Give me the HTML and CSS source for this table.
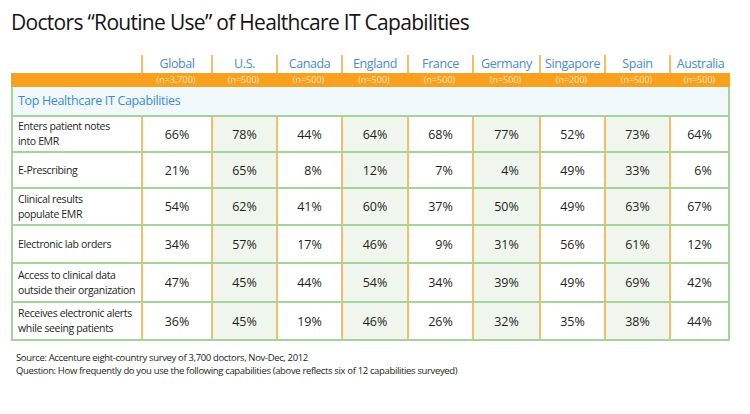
FILE: index.html
```html
<!DOCTYPE html>
<html lang="en">
<head>
<meta charset="utf-8">
<title>Doctors Routine Use of Healthcare IT Capabilities</title>
<link rel="stylesheet" href="styles.css">
</head>
<body>
<h1 class="title">Doctors “Routine Use” of Healthcare IT Capabilities</h1>
<div class="table">
  <div class="hrow">
    <div class="hcell blank"></div>
    <div class="hcell">Global</div>
    <div class="hcell">U.S.</div>
    <div class="hcell">Canada</div>
    <div class="hcell">England</div>
    <div class="hcell">France</div>
    <div class="hcell">Germany</div>
    <div class="hcell">Singapore</div>
    <div class="hcell">Spain</div>
    <div class="hcell">Australia</div>
  </div>
  <div class="nrow">
    <div></div>
    <div>(n=3,700)</div>
    <div>(n=500)</div>
    <div>(n=500)</div>
    <div>(n=500)</div>
    <div>(n=500)</div>
    <div>(n=500)</div>
    <div>(n=200)</div>
    <div>(n=500)</div>
    <div>(n=500)</div>
  </div>
  <div class="body">
    <div class="section">Top Healthcare IT Capabilities</div>
    <div class="row r1">
      <div class="label">Enters patient notes<br>into EMR</div>
      <div class="cell"><span class="v">66%</span></div>
      <div class="cell alt"><span class="v">78%</span></div>
      <div class="cell"><span class="v">44%</span></div>
      <div class="cell alt"><span class="v">64%</span></div>
      <div class="cell"><span class="v">68%</span></div>
      <div class="cell alt"><span class="v">77%</span></div>
      <div class="cell"><span class="v">52%</span></div>
      <div class="cell alt"><span class="v">73%</span></div>
      <div class="cell"><span class="v">64%</span></div>
    </div>
    <div class="row r2">
      <div class="label">E-Prescribing</div>
      <div class="cell"><span class="v">21%</span></div>
      <div class="cell alt"><span class="v">65%</span></div>
      <div class="cell"><span class="v one">8%</span></div>
      <div class="cell alt"><span class="v">12%</span></div>
      <div class="cell"><span class="v one">7%</span></div>
      <div class="cell alt"><span class="v one">4%</span></div>
      <div class="cell"><span class="v">49%</span></div>
      <div class="cell alt"><span class="v">33%</span></div>
      <div class="cell"><span class="v one">6%</span></div>
    </div>
    <div class="row r3">
      <div class="label">Clinical results<br>populate EMR</div>
      <div class="cell"><span class="v">54%</span></div>
      <div class="cell alt"><span class="v">62%</span></div>
      <div class="cell"><span class="v">41%</span></div>
      <div class="cell alt"><span class="v">60%</span></div>
      <div class="cell"><span class="v">37%</span></div>
      <div class="cell alt"><span class="v">50%</span></div>
      <div class="cell"><span class="v">49%</span></div>
      <div class="cell alt"><span class="v">63%</span></div>
      <div class="cell"><span class="v">67%</span></div>
    </div>
    <div class="row r4">
      <div class="label">Electronic lab orders</div>
      <div class="cell"><span class="v">34%</span></div>
      <div class="cell alt"><span class="v">57%</span></div>
      <div class="cell"><span class="v">17%</span></div>
      <div class="cell alt"><span class="v">46%</span></div>
      <div class="cell"><span class="v one">9%</span></div>
      <div class="cell alt"><span class="v">31%</span></div>
      <div class="cell"><span class="v">56%</span></div>
      <div class="cell alt"><span class="v">61%</span></div>
      <div class="cell"><span class="v">12%</span></div>
    </div>
    <div class="row r5">
      <div class="label">Access to clinical data<br>outside their organization</div>
      <div class="cell"><span class="v">47%</span></div>
      <div class="cell alt"><span class="v">45%</span></div>
      <div class="cell"><span class="v">44%</span></div>
      <div class="cell alt"><span class="v">54%</span></div>
      <div class="cell"><span class="v">34%</span></div>
      <div class="cell alt"><span class="v">39%</span></div>
      <div class="cell"><span class="v">49%</span></div>
      <div class="cell alt"><span class="v">69%</span></div>
      <div class="cell"><span class="v">42%</span></div>
    </div>
    <div class="row r6">
      <div class="label">Receives electronic alerts<br>while seeing patients</div>
      <div class="cell"><span class="v">36%</span></div>
      <div class="cell alt"><span class="v">45%</span></div>
      <div class="cell"><span class="v">19%</span></div>
      <div class="cell alt"><span class="v">46%</span></div>
      <div class="cell"><span class="v">26%</span></div>
      <div class="cell alt"><span class="v">32%</span></div>
      <div class="cell"><span class="v">35%</span></div>
      <div class="cell alt"><span class="v">38%</span></div>
      <div class="cell"><span class="v">44%</span></div>
    </div>
  </div>
</div>
<div class="notes">
  <p>Source: Accenture eight-country survey of 3,700 doctors, Nov-Dec, 2012</p>
  <p>Question: How frequently do you use the following capabilities (above reflects six of 12 capabilities surveyed)</p>
</div>
</body>
</html>
```
FILE: styles.css
```css
html, body {
  margin: 0;
  padding: 0;
  background: #ffffff;
}
body {
  font-family: "Open Sans", "Noto Sans", "Liberation Sans", sans-serif;
  color: #231f20;
  padding: 9px 0 0 11px;
  width: 739px;
  height: 405px;
  overflow: hidden;
}
.title {
  margin: 0;
  font-weight: 400;
  font-size: 21px;
  line-height: 26px;
  letter-spacing: -0.7px;
  color: #141414;
}
.table {
  margin-top: 20px;
  width: 719px;
}
.hrow, .nrow {
  display: grid;
  grid-template-columns: 130px 70px 65px 65px 66px 65px 67px 65px 65px 61px;
}
.hrow {
  height: 18px;
}
.hcell {
  border-left: 2px solid #f4bd68;
  color: #4a8bc9;
  font-size: 12.5px;
  line-height: 18px;
  text-align: center;
  letter-spacing: -0.4px;
}
.hcell.blank {
  border-left: none;
}
.nrow {
  height: 14px;
  background: #f7a11f;
  color: #fde4bb;
  font-size: 9px;
  line-height: 14px;
  text-align: center;
}
.body {
  border-left: 2px solid #a5d49b;
  border-right: 2px solid #a5d49b;
}
.section {
  height: 28px;
  border-bottom: 2px solid #a5d49b;
  background: #f1f8fc;
  color: #3a8bcf;
  font-size: 12.5px;
  line-height: 28px;
  padding-left: 5px;
  letter-spacing: -0.35px;
}
.row {
  display: grid;
  grid-template-columns: 128px 70px 65px 65px 66px 65px 67px 65px 65px 59px;
  border-bottom: 2px solid #a5d49b;
}
.r1 { height: 34px; }
.r2 { height: 34px; }
.r3 { height: 35px; }
.r4 { height: 36px; }
.r5 { height: 37px; }
.r6 { height: 36px; }
.label {
  display: flex;
  align-items: center;
  padding-left: 5px;
  font-size: 10.5px;
  line-height: 15px;
  letter-spacing: -0.35px;
  white-space: nowrap;
}
.cell {
  display: flex;
  align-items: center;
  justify-content: center;
  border-left: 2px solid #f4bd68;
  font-size: 12.5px;
  font-variant-numeric: tabular-nums;
}
.cell.alt {
  background: #f0f6ee;
}
.v {
  display: inline-block;
}
.v.one {
  padding-left: 1ch;
}
.notes {
  margin-top: 10px;
  padding-left: 5px;
  font-size: 9.5px;
  line-height: 13px;
  letter-spacing: -0.35px;
}
.notes p {
  margin: 0;
}
```
